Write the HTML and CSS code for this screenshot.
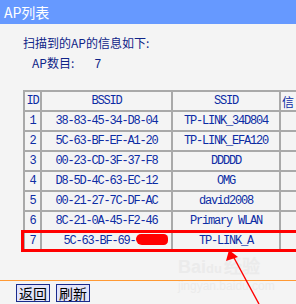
FILE: index.html
```html
<!DOCTYPE html>
<html lang="zh-CN">
<head>
    <meta charset="UTF-8">
    <title>AP列表</title>
    <link rel="stylesheet" href="styles.css">
</head>
<body>

<div class="titlebar">AP列表</div>

<div class="content">
    <p class="intro">扫描到的AP的信息如下:</p>
    <p class="count"><span class="label">AP数目:</span><span class="num">7</span></p>

    <div class="tablewrap">
        <table class="aplist">
            <tr>
                <td class="c-id">ID</td>
                <td class="c-bssid">BSSID</td>
                <td class="c-ssid">SSID</td>
                <td class="c-more">信</td>
            </tr>
            <tr><td>1</td><td>38-83-45-34-D8-04</td><td>TP-LINK_34D804</td><td></td></tr>
            <tr><td>2</td><td>5C-63-BF-EF-A1-20</td><td>TP-LINK_EFA120</td><td></td></tr>
            <tr><td>3</td><td>00-23-CD-3F-37-F8</td><td>DDDDD</td><td></td></tr>
            <tr><td>4</td><td>D8-5D-4C-63-EC-12</td><td>OMG</td><td></td></tr>
            <tr><td>5</td><td>00-21-27-7C-DF-AC</td><td>david2008</td><td></td></tr>
            <tr><td>6</td><td>8C-21-0A-45-F2-46</td><td>Primary WLAN</td><td></td></tr>
            <tr><td>7</td><td>5C-63-BF-69-<span class="blot"></span></td><td>TP-LINK_A</td><td></td></tr>
        </table>
        <!-- red highlight drawn over row 7 -->
        <div class="mark"></div>
    </div>
</div>

<div class="footer">
    <button class="btn">返回</button>
    <button class="btn">刷新</button>
</div>

<div class="watermark">
    <span class="wm-logo">Bai<span class="wm-du">du</span>经验</span>
    <span class="wm-url">jingyan.baidu.com</span>
</div>

<svg class="arrow" width="296" height="304" viewBox="0 0 296 304">
    <line x1="259" y1="304" x2="233" y2="256" stroke="#ff0000" stroke-width="1.4"/>
    <polygon points="229,250 226,261 238,257" fill="#ff0000"/>
</svg>

</body>
</html>
```

FILE: styles.css
```css
body {
    margin: 0;
    width: 296px;
    height: 304px;
    overflow: hidden;
    position: relative;
    background-color: #f4f4f4;
    font-family: "Noto Sans CJK SC", sans-serif;
}
.titlebar {
    height: 24px;
    line-height: 24px;
    padding-left: 4px;
    background-color: #6699ff;
    color: #ffffff;
    font-size: 14px;
}
.content {
    height: 256px;
    box-sizing: border-box;
    padding-top: 11px;
    overflow: hidden;
}
.intro {
    margin: 0 0 0 23px;
    font-size: 12px;
    line-height: 16px;
    color: #0f2488;
}
.count {
    margin: 4px 0 0 32px;
    font-size: 12px;
    line-height: 16px;
    color: #0f2488;
}
.count .num {
    margin-left: 20px;
    font-family: "Liberation Mono", monospace;
}
.tablewrap {
    position: relative;
    margin-top: 17px;
    margin-left: 23px;
    width: 318px;
}
.aplist {
    table-layout: fixed;
    width: 318px;
    border-collapse: separate;
    border-spacing: 0;
    border-top: 2px solid #a9a9a9;
    border-left: 2px solid #a9a9a9;
    font-family: "Liberation Mono", monospace;
    font-size: 12px;
    letter-spacing: -1.2px;
    color: #0c2ca4;
}
.aplist td {
    box-sizing: border-box;
    height: 20px;
    padding: 0;
    text-align: center;
    white-space: nowrap;
    overflow: hidden;
    border-right: 2px solid #a9a9a9;
    border-bottom: 2px solid #a9a9a9;
}
.aplist .c-id { width: 17px; }
.aplist .c-bssid { width: 131px; }
.aplist .c-ssid { width: 108px; }
.aplist .c-more {
    width: 60px;
    text-align: left;
    padding-left: 1px;
    font-family: "Noto Sans CJK SC", sans-serif;
    letter-spacing: 0;
}
.blot {
    display: inline-block;
    width: 32px;
    height: 11px;
    margin-right: -18px;
    vertical-align: -1px;
    background-color: #ff0000;
    border-radius: 6px 5px 5px 7px;
}
.mark {
    position: absolute;
    left: -2px;
    top: 140px;
    width: 330px;
    height: 22px;
    box-sizing: border-box;
    border: 3px solid #ff0000;
}
.footer {
    border-top: 1px solid #ff9933;
    padding: 3px 0 0 16px;
    display: flex;
    gap: 6px;
}
.btn {
    width: 34px;
    height: 18px;
    padding: 0;
    font-family: "Noto Sans CJK SC", sans-serif;
    font-size: 14px;
    line-height: 14px;
    color: #000000;
    background-color: #e2e4fa;
    border: 1px solid #1a2a8c;
    border-radius: 0;
}
.watermark {
    position: absolute;
    left: 178px;
    top: 258px;
    color: #ebebeb;
    line-height: 1;
}
.wm-logo {
    display: block;
    font-family: "Liberation Sans", sans-serif;
    font-weight: bold;
    font-size: 18px;
}
.wm-du {
    font-size: 13px;
    margin-right: 2px;
}
.wm-url {
    display: block;
    margin-top: 4px;
    font-family: "Liberation Sans", sans-serif;
    font-size: 12px;
}
.arrow {
    position: absolute;
    left: 0;
    top: 0;
}
```
